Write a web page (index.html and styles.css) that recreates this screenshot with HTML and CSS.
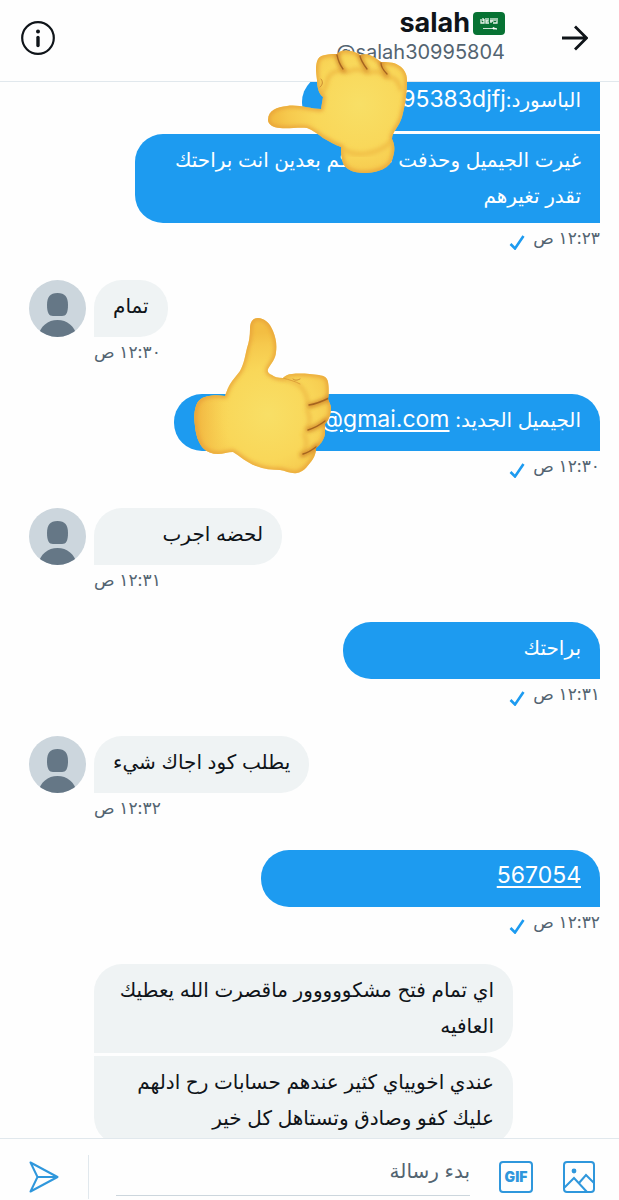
FILE: index.html
```
<!DOCTYPE html>
<html lang="ar" dir="rtl">
<head>
    <meta charset="UTF-8">
    <meta name="viewport" content="width=device-width, initial-scale=1.0">
    <title>salah</title>
    <link rel="stylesheet" href="styles.css">
</head>
<body>
    <!-- Shared shapes -->
    <svg class="defs" aria-hidden="true">
        <defs>
            <radialGradient id="skin" gradientUnits="userSpaceOnUse" cx="78" cy="100" r="82">
                <stop offset="0" stop-color="#f8df66"/>
                <stop offset="0.55" stop-color="#f9d759"/>
                <stop offset="0.85" stop-color="#f6c94d"/>
                <stop offset="1" stop-color="#f3be43"/>
            </radialGradient>
            <radialGradient id="fistSkin" href="#skin" cx="94" cy="54" r="86"/>
            <linearGradient id="wrist" x1="0" y1="0" x2="1" y2="0">
                <stop offset="0" stop-color="#f0b13e"/>
                <stop offset="1" stop-color="#f8cf51" stop-opacity="0"/>
            </linearGradient>
            <filter id="soft" x="-20%" y="-20%" width="140%" height="140%">
                <feGaussianBlur stdDeviation="2"/>
            </filter>
            <path id="handShape" d="M68 4C62 4 60 9 60 15C60 22 59 28 57 34C55 42 54 50 50 57C46 62 41 68 39 72C37 76 36 79 35 82C29 81 23 81 19 82C12 83 8 86 6 92C4 98 4 105 5 112C6 121 8 128 13 134C17 138 22 140 28 140C33 140 38 138 43 138C50 142 57 149 66 152C74 155 82 156 90 156C96 157 101 160 107 159C113 158 117 153 120 149C124 144 126 140 126 134C130 131 134 126 135 120L135 110C139 106 141 100 141 94C141 91 139 88 138 85C139 80 139 73 138 68C137 63 134 62 129 61C121 60 110 59 102 60C98 60 95 62 93 64C88 64 84 63 82 61C79 60 77 58 78 55C81 50 86 44 86 38C87 31 86 24 83 17C80 9 74 4 68 4Z"/>
            <path id="fistShape" d="M2 70C2 60 11 57 21 56C32 54 44 59 55 59L57 47C53 44 51 38 51 30C50 22 49 15 52 9C55 4 65 4 71 4C74 0 80 0 85 1C89 2 92 3 94 5C98 4 102 4 106 6C110 8 112 10 115 12C121 12 128 12 132 15C138 18 141 24 141 30C141 44 139 56 136 67C133 77 126 82 126 89C129 95 129 101 127 107C125 118 112 123 98 123C87 123 79 119 77 113C75 108 75 103 75 97C69 95 63 91 57 88C52 84 46 80 41 78C33 77 22 79 14 78C7 78 2 74 2 70Z"/>
            <clipPath id="handClip"><use href="#handShape"/></clipPath>
            <clipPath id="fistClip"><use href="#fistShape"/></clipPath>
            <symbol id="thumb" viewBox="0 0 144 164">
                <use href="#handShape" fill="url(#skin)"/>
                <g clip-path="url(#handClip)" fill="none" stroke-linecap="round">
                    <rect x="3" y="76" width="36" height="68" fill="url(#wrist)"/>
                    <use href="#handShape" stroke="#e8a138" stroke-width="4" filter="url(#soft)"/>
                    <path d="M93 65C105 67 117 72 118 91M117 96C121 103 121 109 116 116M114 120C118 127 117 134 112 141" stroke="#edb642" stroke-width="3" filter="url(#soft)"/>
                    <path d="M93 64C99 66 105 67 110 70" stroke="#dda03a" stroke-width="1"/>
                    <path d="M103 65C105 67 108 66 110 65" stroke="#c98a32" stroke-width="1"/>
                    <path d="M119 92C126 90 133 88 139 84M118 116C124 114 131 111 136 106M112 141C118 139 123 136 127 132" stroke="#d08428" stroke-width="4" filter="url(#soft)"/>
                    <path d="M119 91C126 90 133 87 139 84M118 116C124 114 130 111 135 107M113 140C118 139 122 136 126 133" stroke="#a5641f" stroke-width="1.4"/>
                </g>
            </symbol>
            <symbol id="fist" viewBox="0 0 144 126">
                <use href="#fistShape" fill="url(#fistSkin)"/>
                <g clip-path="url(#fistClip)" fill="none" stroke-linecap="round">
                    <use href="#fistShape" stroke="#e8a138" stroke-width="4" filter="url(#soft)"/>
                    <path d="M77 99C90 108 112 104 125 92" stroke="#f0bc45" stroke-width="4" filter="url(#soft)"/>
                    <path d="M56 43C62 36 59 26 68 22C74 20 78 20 82 22M82 22C88 18 96 19 101 23M103 23C109 20 115 22 120 27M121 28C128 25 133 32 135 40" stroke="#edb441" stroke-width="3" filter="url(#soft)"/>
                    <path d="M71 4C72 10 74 16 78 21M94 5C95 11 98 16 101 20M115 12C115 17 118 21 121 25" stroke="#d08428" stroke-width="4" filter="url(#soft)"/>
                    <path d="M71 5C72 10 74 15 77 19M94 6C95 11 98 15 101 19M115 13C115 17 118 21 121 24" stroke="#a5641f" stroke-width="1.3"/>
                    <path d="M55 29C57 31 57 35 54 37" stroke="#c98a32" stroke-width="1"/>
                </g>
            </symbol>
            <symbol id="person" viewBox="0 0 57 57">
                <rect width="57" height="57" fill="#ccd6dd"/>
                <path d="M28.500 13C36 13 39 17 39 25C39 33 37 36 33 36H24C20 36 18 33 18 25C18 17 21 13 28.500 13Z" fill="#657786"/>
                <path d="M9 57C11 46 19 40 28.500 40C38 40 46 46 48 57Z" fill="#657786"/>
            </symbol>
            <symbol id="check" viewBox="0 0 16 16">
                <path d="M1.500 10L6 14.500L14.500 2" fill="none" stroke="#1d9bf0" stroke-width="2.600"/>
            </symbol>
        </defs>
    </svg>

    <header class="header">
        <button class="icon-btn" type="button" aria-label="رجوع">
            <svg width="26" height="26" viewBox="0 0 26 26" fill="none" stroke="#0f1419" stroke-width="2.800"><path d="M0 13H24M13 1.500L24.500 13L13 24.500"/></svg>
        </button>
        <div class="profile">
            <h1 class="name">
                <svg class="flag" width="32" height="23" viewBox="0 0 32 23">
                    <rect width="32" height="23" rx="4" fill="#077233"/>
                    <path d="M8 7V11H11V7M10 6V9M13 6V11H16M15 6V9H13M18 6V11M20 6V9H17M20 11H24V6M22 6V9" fill="none" stroke="#e8f3ea" stroke-width="1.300"/>
                    <path d="M10 16.500H21M20 15.500L24 17H20Z" fill="#fff" stroke="#fff" stroke-width="0.800"/>
                </svg>
                <span>salah</span>
            </h1>
            <p class="handle" dir="ltr">@salah30995804</p>
        </div>
        <button class="icon-btn info" type="button" aria-label="معلومات">
            <svg width="34" height="34" viewBox="0 0 34 34" fill="none" stroke="#0f1419"><circle cx="17" cy="17" r="15.800" stroke-width="2.200"/><path d="M17 16.500V24.500" stroke-width="3.400" stroke-linecap="round"/><circle cx="17" cy="10.500" r="2" fill="#0f1419" stroke="none"/></svg>
        </button>
    </header>

    <main class="chat">
        <div class="thread">
            <section class="group sent">
                <p class="bubble joined follow size-l">الباسورد:<bdi class="latin">s095383djfj</bdi></p>
                <p class="bubble last follow size-xl">غيرت الجيميل وحذفت حسابكم بعدين انت براحتك<br>تقدر تغيرهم</p>
                <div class="meta"><time>١٢:٢٣ ص</time><svg class="tick"><use href="#check"/></svg></div>
            </section>

            <section class="group received">
                <svg class="avatar"><use href="#person"/></svg>
                <p class="bubble last">تمام</p>
                <div class="meta"><time>١٢:٣٠ ص</time></div>
            </section>

            <section class="group sent">
                <p class="bubble last size-lg">الجيميل الجديد: <a class="latin" href="#">salah3099@gmai.com</a></p>
                <div class="meta"><time>١٢:٣٠ ص</time><svg class="tick"><use href="#check"/></svg></div>
            </section>

            <section class="group received">
                <svg class="avatar"><use href="#person"/></svg>
                <p class="bubble last size-s">لحضه اجرب</p>
                <div class="meta"><time>١٢:٣١ ص</time></div>
            </section>

            <section class="group sent">
                <p class="bubble last size-m">براحتك</p>
                <div class="meta"><time>١٢:٣١ ص</time><svg class="tick"><use href="#check"/></svg></div>
            </section>

            <section class="group received">
                <svg class="avatar"><use href="#person"/></svg>
                <p class="bubble last">يطلب كود اجاك شيء</p>
                <div class="meta"><time>١٢:٣٢ ص</time></div>
            </section>

            <section class="group sent">
                <p class="bubble last size-ml"><a class="latin" href="#">567054</a></p>
                <div class="meta"><time>١٢:٣٢ ص</time><svg class="tick"><use href="#check"/></svg></div>
            </section>

            <section class="group received">
                <p class="bubble joined size-w">اي تمام فتح مشكووووور ماقصرت الله يعطيك<br>العافيه</p>
                <p class="bubble follow size-w">عندي اخويياي كثير عندهم حسابات رح ادلهم<br>عليك كفو وصادق وتستاهل كل خير</p>
            </section>
        </div>
    </main>

    <form class="composer">
        <button class="icon-btn" type="button" aria-label="صورة">
            <svg width="32" height="32" viewBox="0 0 32 32" fill="none" stroke="#2f97dc" stroke-width="2"><rect x="1" y="1" width="30" height="30" rx="3"/><path d="M1 27L11 17L24 31M16 22L23 14L31 22"/><circle cx="11" cy="10" r="2.400" fill="#2f97dc" stroke="none"/></svg>
        </button>
        <button class="icon-btn" type="button" aria-label="GIF">
            <svg width="34" height="32" viewBox="0 0 34 32"><rect x="1" y="1" width="32" height="30" rx="3" fill="none" stroke="#2f97dc" stroke-width="2"/><text class="gif" x="17" y="21" text-anchor="middle">GIF</text></svg>
        </button>
        <input class="field" type="text" placeholder="بدء رسالة" aria-label="بدء رسالة">
        <div class="send">
            <button class="icon-btn" type="submit" aria-label="إرسال">
                <svg width="30" height="32" viewBox="0 0 30 32" fill="none" stroke="#2f97dc" stroke-width="2" stroke-linejoin="round"><path d="M1.500 1.500L28.500 16L1.500 30.500L8.500 16ZM8.500 16H28.500"/></svg>
            </button>
        </div>
    </form>

    <!-- Stickers lying over the conversation -->
    <svg class="sticker sticker-fist"><use href="#fist"/></svg>
    <svg class="sticker sticker-thumb"><use href="#thumb"/></svg>
</body>
</html>
```
FILE: styles.css
```
* {
    margin: 0;
    padding: 0;
    box-sizing: border-box;
}

body {
    position: relative;
    display: flex;
    flex-direction: column;
    height: 100vh;
    background-color: #fefefe;
    color: #0f1419;
    font-family: Inter, "DejaVu Sans", sans-serif;
    font-size: 20px;
    line-height: 36px;
}

.defs {
    position: absolute;
    width: 0;
    height: 0;
}

.icon-btn {
    display: flex;
    flex: none;
    border: none;
    background: none;
    font-family: inherit;
    cursor: pointer;
}

/* Header */
.header {
    display: flex;
    align-items: flex-start;
    flex: none;
    height: 82px;
    padding: 8px 31px 0 21px;
    border-bottom: 1px solid #e1e8ed;
}

.header .icon-btn {
    margin-top: 17px;
}

.header .info {
    margin-top: 13px;
    margin-right: auto;
}

.profile {
    margin-right: 57px;
}

.name {
    display: flex;
    align-items: center;
    gap: 3px;
    font-size: 27px;
    line-height: 30px;
}

.handle {
    color: #536471;
    line-height: 28px;
}

/* Conversation */
.chat {
    flex: 1;
    min-height: 0;
    overflow: hidden;
}

.thread {
    display: flex;
    flex-direction: column;
    gap: 33px;
    padding: 0 19px 0 29px;
    margin-top: -11px;
}

.group {
    display: grid;
    justify-items: start;
}

.bubble {
    min-height: 57px;
    max-width: 100%;
    padding: 8px 19px 9px;
    border-radius: 28px;
    white-space: nowrap;
}

.latin {
    font-size: 23px;
    line-height: 30px;
}

.bubble a {
    color: inherit;
    text-underline-offset: 3px;
}

.sent .bubble {
    background-color: #1d9bf0;
    color: #fff;
}

.sent .joined,
.sent .last {
    border-bottom-right-radius: 0;
}

.sent .follow {
    border-top-right-radius: 0;
}

.follow {
    margin-top: 3px;
}

.received {
    grid-template-columns: 57px auto;
    column-gap: 8px;
    justify-content: start;
    direction: ltr;
}

.received .bubble {
    grid-column: 2;
    background-color: #eff3f4;
    direction: rtl;
}

.received .joined,
.received .last {
    border-bottom-left-radius: 0;
}

.received .follow {
    border-top-left-radius: 0;
}

.avatar {
    width: 57px;
    height: 57px;
    border-radius: 50%;
}

.meta {
    display: flex;
    align-items: center;
    gap: 8px;
    height: 24px;
    padding-top: 5px;
    color: #536471;
    font-size: 17px;
    direction: rtl;
}

.received .meta {
    grid-column: 2;
}

.tick {
    width: 16px;
    height: 16px;
    margin-top: 8px;
}

/* Bubble widths */
.size-s { width: 188px; }
.size-m { width: 257px; }
.size-l { width: 298px; }
.size-ml { width: 339px; }
.size-w { width: 419px; }
.size-lg { width: 426px; }
.size-xl { width: 465px; }

/* Composer */
.composer {
    display: flex;
    align-items: center;
    flex: none;
    height: 62px;
    padding: 14px 24px 0 29px;
    border-top: 1px solid #e1e8ed;
}

.composer .icon-btn + .icon-btn {
    margin-right: 30px;
}

.gif {
    fill: #2f97dc;
    font-size: 14px;
    font-weight: 900;
}

.field {
    flex: 1;
    min-width: 0;
    height: 38px;
    margin: 0 29px 0 27px;
    padding-bottom: 10px;
    border: none;
    border-bottom: 1px solid #ccd6dd;
    background: none;
    color: inherit;
    font: inherit;
    outline: none;
}

.field::placeholder {
    color: #536471;
    opacity: 1;
}

.send {
    display: flex;
    align-items: center;
    height: 44px;
    padding-right: 29px;
    border-right: 1px solid #e1e8ed;
}

/* Stickers */
.sticker {
    position: absolute;
    pointer-events: none;
}

.sticker-fist {
    top: 50px;
    right: 209px;
    width: 144px;
    height: 126px;
}

.sticker-thumb {
    top: 314px;
    right: 285px;
    width: 144px;
    height: 164px;
}
```
